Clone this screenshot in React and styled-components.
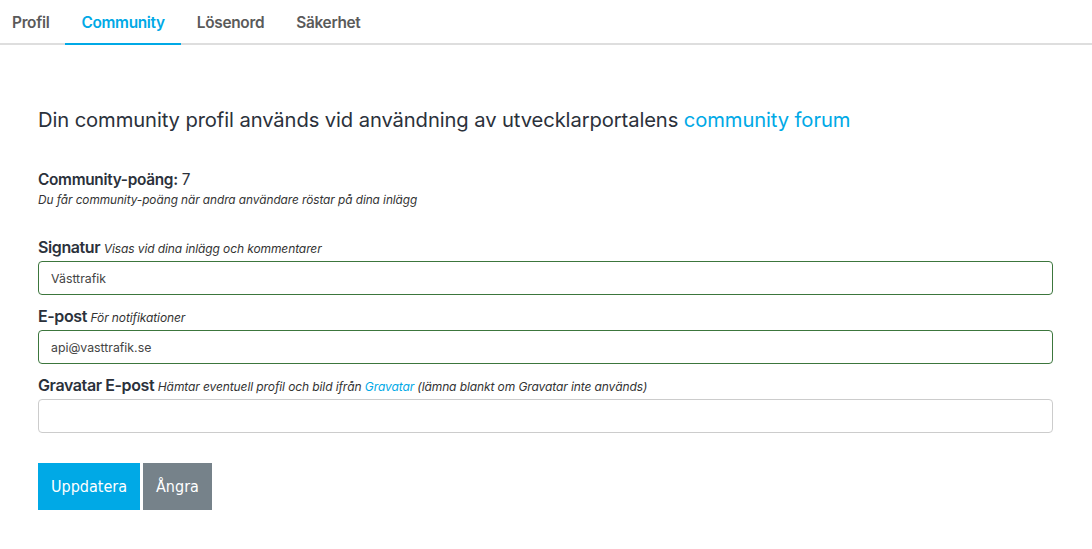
import React from "react";
import styled, { createGlobalStyle } from "styled-components";

const Global = createGlobalStyle`
  html, body { margin: 0; padding: 0; background: #fff; }
  body { font-family: Inter, "Open Sans", sans-serif; color: #333; }
  * { box-sizing: border-box; }
`;

const Page = styled.div`
  width: 1092px;
  min-height: 549px;
  background: #fff;
`;

const TabBar = styled.nav`
  display: flex;
  height: 45px;
  border-bottom: 2px solid #dedede;
`;

const Tab = styled.a`
  display: flex;
  align-items: center;
  height: 45px;
  padding: 2px 16px 0;
  padding-left: ${(p) => (p.$first ? "12px" : "16px")};
  font-size: 15.4px;
  font-weight: 600;
  letter-spacing: -0.3px;
  color: ${(p) => (p.$active ? "#00a9e6" : "#5a5a5a")};
  border-bottom: 2px solid ${(p) => (p.$active ? "#00a9e6" : "transparent")};
  margin-bottom: -2px;
  text-decoration: none;
  cursor: pointer;
`;

const Content = styled.main`
  padding: 62px 39px 0 38px;
  display: flex;
  flex-direction: column;
`;

const Lead = styled.h2`
  margin: 0 0 38px;
  font-size: 20.2px;
  font-weight: 400;
  color: #2b313b;
  letter-spacing: -0.1px;
`;

const Link = styled.a`
  color: #00a9e6;
  text-decoration: none;
`;

const Points = styled.div`
  font-size: 15.4px;
  color: #2b313b;
  letter-spacing: -0.3px;
`;

const Strong = styled.span`
  font-weight: 600;
`;

const Note = styled.div`
  margin-top: 4px;
  font-size: 11.8px;
  font-style: italic;
  color: #333;
  letter-spacing: -0.05px;
`;

const Field = styled.div`
  display: flex;
  flex-direction: column;
  margin-top: ${(p) => p.$mt || "12px"};
`;

const Label = styled.label`
  font-size: 16px;
  font-weight: 600;
  color: #2b313b;
  letter-spacing: -0.4px;
  margin-bottom: 3px;
  line-height: 19px;
`;

const Hint = styled.span`
  font-size: 12px;
  font-weight: 400;
  font-style: italic;
  color: #333;
  letter-spacing: -0.1px;
`;

const Input = styled.input`
  height: 34px;
  width: 100%;
  padding: 0 12px;
  border: 1px solid ${(p) => (p.$valid ? "#3c763d" : "#cccccc")};
  border-radius: 4px;
  font-family: Inter, sans-serif;
  font-size: 12.3px;
  color: #444;
  outline: none;
`;

const Actions = styled.div`
  display: flex;
  gap: 3px;
  margin-top: 30px;
`;

const Button = styled.button`
  height: 47px;
  padding: 0 13px;
  border: none;
  border-radius: 0;
  background: ${(p) => (p.$secondary ? "#76828a" : "#00a9e6")};
  color: #fff;
  font-family: "Liberation Sans Narrow", "DejaVu Sans Condensed", "Liberation Sans", sans-serif;
  font-size: 16px;
  cursor: pointer;
`;

export default function App() {
  return (
    <Page>
      <Global />
      <TabBar>
        <Tab $first>Profil</Tab>
        <Tab $active>Community</Tab>
        <Tab>Lösenord</Tab>
        <Tab>Säkerhet</Tab>
      </TabBar>
      <Content>
        <Lead>
          Din community profil används vid användning av utvecklarportalens{" "}
          <Link href="#">community forum</Link>
        </Lead>
        <Points>
          <Strong>Community-poäng:</Strong> 7
        </Points>
        <Note>Du får community-poäng när andra användare röstar på dina inlägg</Note>

        <Field $mt="31px">
          <Label>
            Signatur <Hint>Visas vid dina inlägg och kommentarer</Hint>
          </Label>
          <Input $valid defaultValue="Västtrafik" />
        </Field>
        <Field>
          <Label>
            E-post <Hint>För notifikationer</Hint>
          </Label>
          <Input $valid defaultValue="api@vasttrafik.se" />
        </Field>
        <Field>
          <Label>
            Gravatar E-post{" "}
            <Hint>
              Hämtar eventuell profil och bild ifrån <Link href="#">Gravatar</Link> (lämna blankt om
              Gravatar inte används)
            </Hint>
          </Label>
          <Input defaultValue="" />
        </Field>
        <Actions>
          <Button>Uppdatera</Button>
          <Button $secondary>Ångra</Button>
        </Actions>
      </Content>
    </Page>
  );
}
